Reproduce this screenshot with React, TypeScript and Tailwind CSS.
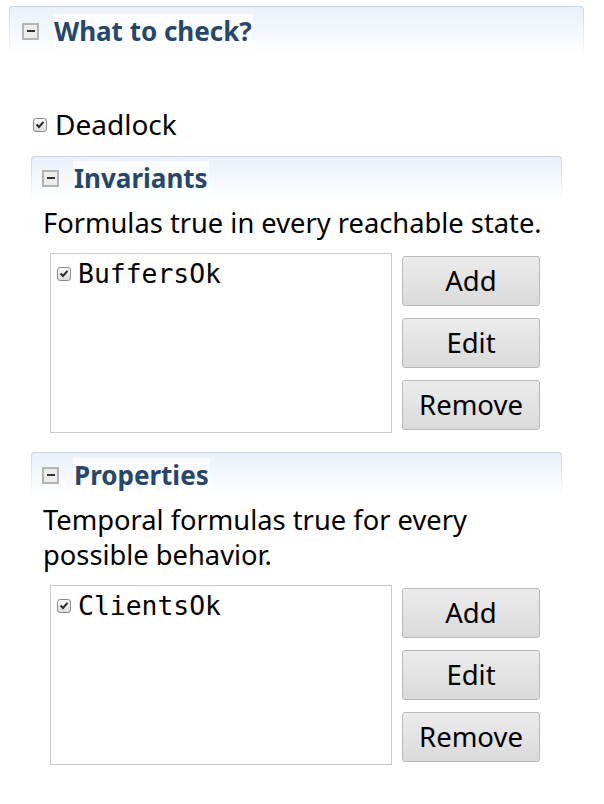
import React from "react";

const sans = "font-['Noto_Sans',sans-serif]";

function CollapseIcon() {
  return (
    <div className="flex h-[17px] w-[17px] items-center justify-center border-2 border-[#b4b4b4] bg-[#ececec]">
      <div className="h-[2px] w-[8px] bg-[#333]" />
    </div>
  );
}

function Check() {
  return (
    <div className="flex h-[14px] w-[14px] shrink-0 items-center justify-center rounded-[3px] border border-[#8c8c8c] bg-gradient-to-b from-[#fafafa] to-[#dcdcdc]">
      <svg width="10" height="9" viewBox="0 0 10 9">
        <path d="M1.5 4.5 L4 7 L8.5 1.8" fill="none" stroke="#2a2a2a" strokeWidth="2" />
      </svg>
    </div>
  );
}

function Section({
  title,
  className,
  headerClass,
  children,
}: {
  title: string;
  className?: string;
  headerClass?: string;
  children: React.ReactNode;
}) {
  return (
    <div className={className}>
      <div className="rounded-t-[4px] bg-gradient-to-b from-[#c2d6ec] via-[#dde9f6] to-white px-px pt-px">
        <div className={`flex items-center rounded-t-[3px] bg-gradient-to-b from-[#eaf1fa] to-white ${headerClass}`}>
          <CollapseIcon />
          <div className="ml-[14px] bg-white/70 px-[1px] text-[26px] font-bold leading-[35px] text-[#25476c]">{title}</div>
        </div>
      </div>
      {children}
    </div>
  );
}

function ListEditor({ item }: { item: string }) {
  return (
    <div className="mr-[22px] ml-[19px] flex">
      <div className="h-[180px] w-[342px] border border-[#c9c9c9] bg-white px-[6px] pt-[6px]">
        <div className="flex items-center gap-[7px]">
          <Check />
          <span className="font-['DejaVu_Sans_Mono',monospace] text-[26.4px] leading-[27px] text-black">{item}</span>
        </div>
      </div>
      <div className="ml-auto flex flex-col gap-[12px] pt-[3px]">
        {["Add", "Edit", "Remove"].map((b) => (
          <div
            key={b}
            className="flex h-[50px] w-[138px] items-center justify-center rounded-[3px] border border-[#b9b9b9] bg-gradient-to-b from-[#ececec] to-[#dadada] text-[27.5px] text-black"
          >
            {b}
          </div>
        ))}
      </div>
    </div>
  );
}

export default function App() {
  return (
    <div className={`h-[804px] w-[604px] bg-white pt-[6px] ${sans}`}>
      <Section title="What to check?" className="mr-[20px] ml-[9px]" headerClass="h-[50px] pl-[12px] pb-[2px]">
        <div className="px-[22px] pt-[50px]">
          <div className="flex items-center gap-[8px] pl-[2px] text-[28px] leading-[35px] text-black">
            <Check />
            <span>Deadlock</span>
          </div>
          <Section title="Invariants" className="mt-[14px]" headerClass="h-[44px] pl-[10px] pt-[1px] pb-[3px]">
            <div className="px-[12px] pt-[4px] text-[27.3px] leading-[35px] text-black">
              Formulas true in every reachable state.
            </div>
            <div className="mt-[13px]">
              <ListEditor item="BuffersOk" />
            </div>
          </Section>
          <Section title="Properties" className="mt-[19px]" headerClass="h-[44px] pl-[10px] pt-[2px] pb-[2px]">
            <div className="px-[12px] pt-[5px] text-[27.3px] leading-[35px] text-black">
              Temporal formulas true for every
              <br />
              possible behavior.
            </div>
            <div className="mt-[13px]">
              <ListEditor item="ClientsOk" />
            </div>
          </Section>
        </div>
      </Section>
    </div>
  );
}
